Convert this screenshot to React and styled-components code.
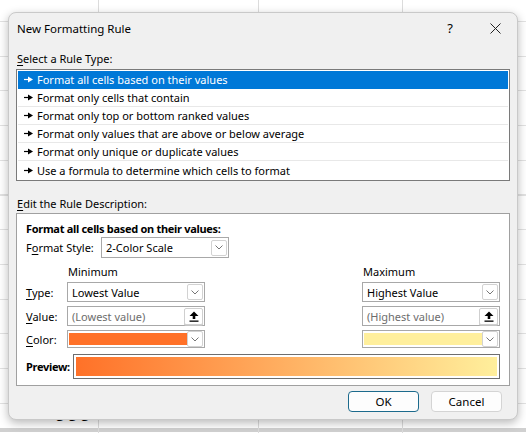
import styled, { createGlobalStyle } from "styled-components";

const GlobalStyle = createGlobalStyle`
  html, body { margin: 0; padding: 0; }
  body {
    font-family: "Noto Sans", "Open Sans", sans-serif;
    font-size: 11px;
    color: #000;
    background: #fff;
    overflow: hidden;
  }
`;

const rules = [
  "Format all cells based on their values",
  "Format only cells that contain",
  "Format only top or bottom ranked values",
  "Format only values that are above or below average",
  "Format only unique or duplicate values",
  "Use a formula to determine which cells to format",
];

const Sheet = styled.div`
  position: relative;
  width: 526px;
  height: 433px;
  overflow: hidden;
  background:
    linear-gradient(#dcdcdc, #dcdcdc) 98px 0 / 1px 100% no-repeat,
    linear-gradient(#dcdcdc, #dcdcdc) 258px 0 / 1px 100% no-repeat,
    linear-gradient(#dcdcdc, #dcdcdc) 402px 0 / 1px 100% no-repeat,
    linear-gradient(#d0d0d0, #d0d0d0) 0 428px / 100% 4px no-repeat,
    repeating-linear-gradient(to bottom, transparent 0, transparent 21px, #e2e2e2 21px, #e2e2e2 22px, transparent 22px, transparent 34.7px);
`;

const Cell = styled.div`
  position: absolute;
  left: 54px;
  top: 404px;
  height: 20px;
  line-height: 20px;
  font-size: 20px;
  font-weight: 700;
  letter-spacing: 1px;
  overflow: hidden;
`;

const Dialog = styled.div`
  position: absolute;
  left: 8px;
  top: 12px;
  width: 510px;
  height: 408px;
  box-sizing: border-box;
  background: #f0f0f0;
  border: 1px solid #c9c9c9;
  border-radius: 8px;
  box-shadow: 0 3px 10px rgba(0, 0, 0, 0.28);
  display: flex;
  flex-direction: column;
`;

const TitleBar = styled.div`
  height: 30px;
  display: flex;
  align-items: center;
  padding: 0 14px 0 8px;
  font-size: 11.5px;
`;

const Title = styled.span`
  flex: 1;
`;

const TitleButton = styled.span`
  width: 16px;
  display: flex;
  justify-content: center;
  margin-left: ${(p) => p.$gap || 0}px;
  font-size: 13px;
`;

const Body = styled.div`
  padding: 0 7px;
  display: flex;
  flex-direction: column;
`;

const SectionLabel = styled.div`
  margin-top: ${(p) => p.$top}px;
  padding-left: 1px;
  line-height: 16px;
  height: 16px;
`;

const ListBox = styled.div`
  margin-top: 2px;
  height: 108px;
  border: 1px solid #7a7a7a;
  box-shadow: inset 0 0 0 1px #fff;
  padding: 1px;
  background: #fff;
  display: flex;
  flex-direction: column;
`;

const ListRow = styled.div`
  height: 18px;
  flex-shrink: 0;
  box-sizing: border-box;
  display: flex;
  align-items: center;
  padding-left: 6px;
  gap: 4px;
  background: ${(p) => (p.$selected ? "#0078d7" : "#fff")};
  color: ${(p) => (p.$selected ? "#fff" : "#000")};
  border-bottom: 1px solid ${(p) => (p.$selected ? "#0078d7" : "#e8e8e8")};
  &:last-child { border-bottom: none; }
`;

const Panel = styled.div`
  margin-top: 1px;
  height: 173px;
  box-sizing: border-box;
  background: #fff;
  border: 1px solid #a0a0a0;
  padding: 7px 9px 0 9px;
  display: flex;
  flex-direction: column;
`;

const Heading = styled.div`
  font-weight: 700;
  letter-spacing: -0.3px;
  line-height: 16px;
`;

const StyleRow = styled.div`
  display: flex;
  align-items: center;
  height: 21px;
`;

const StyleLabel = styled.span`
  width: 75px;
`;

const Grid = styled.div`
  margin-top: 6px;
  display: grid;
  grid-template-columns: 41px 138px 1fr 138px;
  row-gap: 4px;
  align-items: center;
`;

const ColHead = styled.div`
  grid-column: ${(p) => p.$col};
  line-height: 16px;
  padding-left: 1px;
  margin-bottom: -2px;
`;

const RowLabel = styled.div`
  grid-column: 1;
`;

const Field = styled.div`
  grid-column: ${(p) => p.$col || "auto"};
  width: ${(p) => p.$width || 138}px;
  height: ${(p) => p.$h || 20}px;
  box-sizing: border-box;
  border: 1px solid #a8a8a8;
  background: #fff;
  display: flex;
  align-items: center;
  padding: 0 1px 0 4px;
  color: ${(p) => (p.$muted ? "#6d6d6d" : "#000")};
`;

const FieldText = styled.span`
  flex: 1;
`;

const Swatch = styled.div`
  flex: 1;
  height: 12px;
  margin-left: -3px;
  background: ${(p) => p.$color};
`;

const DropBtn = styled.span`
  width: 16px;
  height: 16px;
  box-sizing: border-box;
  border: 1px solid #d2d2d2;
  border-radius: 2px;
  display: flex;
  align-items: center;
  justify-content: center;
  background: #fff;
`;

const UpBtn = styled(DropBtn)`
  width: 19px;
  height: 17px;
  border-color: #cfcfcf;
  box-shadow: 0 1px 0 #c4c4c4;
`;

const PreviewRow = styled.div`
  margin-top: 6px;
  display: flex;
  align-items: center;
  gap: 3px;
`;

const PreviewLabel = styled.span`
  font-weight: 700;
  letter-spacing: -0.3px;
  flex-shrink: 0;
`;

const PreviewBar = styled.div`
  flex: 1;
  height: 25px;
  box-sizing: border-box;
  border: 1px solid #6e6e6e;
  padding: 2px;
  background: #fff;
  &::after {
    content: "";
    display: block;
    height: 100%;
    background: linear-gradient(to right, #ff7128, #ffef9c);
  }
`;

const Footer = styled.div`
  margin-top: 5px;
  display: flex;
  justify-content: flex-end;
  gap: 12px;
  padding-right: 15px;
`;

const Button = styled.button`
  width: 71px;
  height: 21px;
  font: inherit;
  font-size: 11.5px;
  background: #fdfdfd;
  color: #000;
  border: 1px solid ${(p) => (p.$primary ? "#1c6a8c" : "#d4d4d4")};
  border-radius: 4px;
  padding: 0;
`;

const Ul = styled.u`
  text-underline-offset: 2px;
`;

function Bullet() {
  return (
    <svg width="9" height="7" viewBox="0 0 9 7">
      <line x1="0" y1="3.5" x2="5" y2="3.5" stroke="currentColor" strokeWidth="1.2" />
      <polygon points="4,0.5 9,3.5 4,6.5" fill="currentColor" />
    </svg>
  );
}

function Chevron() {
  return (
    <svg width="8" height="5" viewBox="0 0 8 5">
      <polyline points="0.5,0.5 4,4 7.5,0.5" fill="none" stroke="#666" strokeWidth="0.9" />
    </svg>
  );
}

function UpArrow() {
  return (
    <svg width="10" height="11" viewBox="0 0 10 11">
      <polygon points="5,0.5 9.5,5 6.3,5 6.3,8 3.7,8 3.7,5 0.5,5" fill="#000" />
      <rect x="0.5" y="9.5" width="9" height="1.3" fill="#000" />
    </svg>
  );
}

function CloseIcon() {
  return (
    <svg width="11" height="11" viewBox="0 0 11 11">
      <path d="M0.5 0.5 L10.5 10.5 M10.5 0.5 L0.5 10.5" stroke="#222" strokeWidth="1" />
    </svg>
  );
}

export default function App() {
  return (
    <>
      <GlobalStyle />
      <Sheet>
        <Cell>000</Cell>
        <Dialog>
          <TitleBar>
            <Title>New Formatting Rule</Title>
            <TitleButton>?</TitleButton>
            <TitleButton $gap={29}><CloseIcon /></TitleButton>
          </TitleBar>
          <Body>
            <SectionLabel $top={8}><Ul>S</Ul>elect a Rule Type:</SectionLabel>
            <ListBox>
              {rules.map((r, i) => (
                <ListRow key={r} $selected={i === 0}>
                  <Bullet />
                  <span>{r}</span>
                </ListRow>
              ))}
            </ListBox>
            <SectionLabel $top={15}><Ul>E</Ul>dit the Rule Description:</SectionLabel>
            <Panel>
              <Heading>Format all cells based on their values:</Heading>
              <StyleRow>
                <StyleLabel>F<Ul>o</Ul>rmat Style:</StyleLabel>
                <Field $width={128} $h={21}>
                  <FieldText>2-Color Scale</FieldText>
                  <DropBtn><Chevron /></DropBtn>
                </Field>
              </StyleRow>
              <Grid>
                <ColHead $col={2}>Minimum</ColHead>
                <ColHead $col={4}>Maximum</ColHead>

                <RowLabel><Ul>T</Ul>ype:</RowLabel>
                <Field $col={2}>
                  <FieldText>Lowest Value</FieldText>
                  <DropBtn><Chevron /></DropBtn>
                </Field>
                <Field $col={4}>
                  <FieldText>Highest Value</FieldText>
                  <DropBtn><Chevron /></DropBtn>
                </Field>

                <RowLabel><Ul>V</Ul>alue:</RowLabel>
                <Field $col={2} $muted>
                  <FieldText>(Lowest value)</FieldText>
                  <UpBtn><UpArrow /></UpBtn>
                </Field>
                <Field $col={4} $muted>
                  <FieldText>(Highest value)</FieldText>
                  <UpBtn><UpArrow /></UpBtn>
                </Field>

                <RowLabel><Ul>C</Ul>olor:</RowLabel>
                <Field $col={2} $h={18}>
                  <Swatch $color="#ff7128" />
                  <DropBtn><Chevron /></DropBtn>
                </Field>
                <Field $col={4} $h={18}>
                  <Swatch $color="#ffef9c" />
                  <DropBtn><Chevron /></DropBtn>
                </Field>
              </Grid>
              <PreviewRow>
                <PreviewLabel>Preview:</PreviewLabel>
                <PreviewBar />
              </PreviewRow>
            </Panel>
          </Body>
          <Footer>
            <Button $primary>OK</Button>
            <Button>Cancel</Button>
          </Footer>
        </Dialog>
      </Sheet>
    </>
  );
}
